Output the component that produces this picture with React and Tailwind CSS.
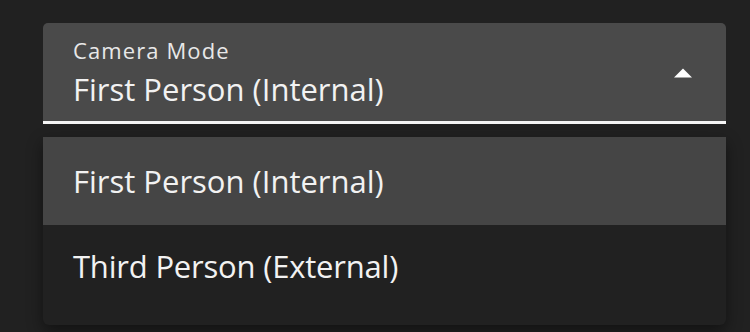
import { useState } from "react";

const options = ["First Person (Internal)", "Third Person (External)"];

export default function App() {
  const [value, setValue] = useState(options[0]);

  return (
    <div
      className="w-[750px] h-[332px] bg-[#212121] pt-[23px] pl-[43px] pr-[24px] overflow-hidden"
      style={{ fontFamily: '"Open Sans", "Liberation Sans", sans-serif' }}
    >
      <div className="h-[101px] rounded-t-[5px] bg-[#4a4a4a] border-b-[3px] border-[#f5f5f5] pl-[30px] pr-[33px] pt-[13px] flex items-start">
        <div className="flex-1">
          <div className="text-[22px] leading-[28px] text-[#e8e8e8] tracking-[1.1px]">Camera Mode</div>
          <div className="mt-[5px] text-[31px] leading-[40px] text-[#f2f2f2]">{value}</div>
        </div>
        <svg width="20" height="10" viewBox="0 0 20 10" className="mt-[32px]">
          <path d="M1 9.5 L10 0.5 L19 9.5 Z" fill="#ffffff" />
        </svg>
      </div>

      <div className="mt-[13px] rounded-b-[6px] bg-[#212121] pb-[12px] shadow-[0_6px_16px_rgba(0,0,0,0.45)] overflow-hidden">
        {options.map((opt, i) => (
          <div
            key={opt}
            onClick={() => setValue(opt)}
            className={`h-[88px] pl-[30px] flex items-center text-[31px] text-[#f2f2f2] cursor-pointer ${
              opt === value ? "bg-[#454545]" : "bg-[#212121]"
            } ${i === 1 ? "pb-[5px] tracking-[-0.2px]" : ""}`}
          >
            {opt}
          </div>
        ))}
      </div>
    </div>
  );
}
